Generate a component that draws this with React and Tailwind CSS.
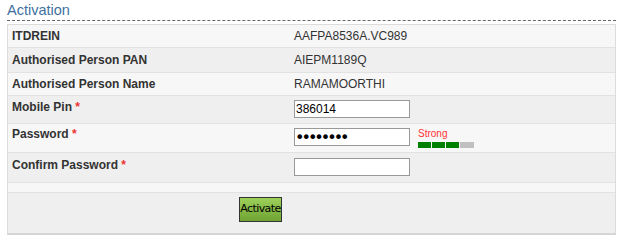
export default function App() {
  const rows = [
    { label: 'ITDREIN', value: 'AAFPA8536A.VC989', h: 'h-[23px]' },
    { label: 'Authorised Person PAN', value: 'AIEPM1189Q', h: 'h-[25px]' },
    { label: 'Authorised Person Name', value: 'RAMAMOORTHI', h: 'h-[23px]' },
  ]

  return (
    <div className="w-[627px] h-[242px] bg-white font-['Liberation_Sans',Arial,sans-serif] text-[12px] text-[#333]">
      <div className="pl-[7px] pr-[11px] pt-[1px]">
        <h3 className="text-[14.5px] leading-[18px] text-[#41709e] font-normal">Activation</h3>
        <div className="mt-[1px] border-t border-dashed border-[#666]" />
        <div className="mt-[3px] border border-[#dcdcdc] border-b-2 border-b-[#d5d5d5]">
          {rows.map((r, i) => (
            <div
              key={r.label}
              className={`flex items-center ${r.h} border-b border-[#e2e2e2] ${i % 2 === 0 ? 'bg-[#f7f7f7]' : 'bg-[#efefef]'}`}
            >
              <div className="w-[286px] pl-[4px] font-bold">{r.label}</div>
              <div>{r.value}</div>
            </div>
          ))}

          <div className="flex h-[28px] border-b border-[#e2e2e2] bg-[#efefef]">
            <div className="w-[286px] pl-[4px] pt-[2px] font-bold">
              Mobile Pin <span className="text-[#e33]">*</span>
            </div>
            <div className="pt-[4px]">
              <input
                readOnly
                value="386014"
                className="w-[116px] h-[18px] bg-white border border-[#999] px-[1px] text-[12px] leading-none text-black outline-none"
              />
            </div>
          </div>

          <div className="flex h-[29px] border-b border-[#e2e2e2] bg-[#f7f7f7]">
            <div className="w-[286px] pl-[4px] pt-[1px] font-bold">
              Password <span className="text-[#e33]">*</span>
            </div>
            <div className="pt-[4px]">
              <input
                readOnly
                type="password"
                value="12345678"
                className="w-[116px] h-[18px] bg-white border border-[#999] px-0 font-['DejaVu_Sans',sans-serif] text-[16px] tracking-[-3px] leading-none text-black outline-none"
              />
            </div>
            <div className="pl-[8px] pt-[4px]">
              <div className="text-[10px] leading-[11px] text-[#f33]">Strong</div>
              <div className="mt-[3px] flex gap-[1px]">
                <div className="w-[13px] h-[6px] bg-[#008000]" />
                <div className="w-[13px] h-[6px] bg-[#008000]" />
                <div className="w-[13px] h-[6px] bg-[#008000]" />
                <div className="w-[14px] h-[6px] bg-[#c0c0c0]" />
              </div>
            </div>
          </div>

          <div className="flex h-[30px] border-b border-[#e2e2e2] bg-[#efefef]">
            <div className="w-[286px] pl-[4px] pt-[3px] font-bold">
              Confirm Password <span className="text-[#e33]">*</span>
            </div>
            <div className="pt-[5px]">
              <input
                readOnly
                type="password"
                value=""
                className="w-[116px] h-[18px] bg-white border border-[#999] px-[1px] text-[12px] leading-none text-black outline-none"
              />
            </div>
          </div>

          <div className="h-[10px] border-b border-[#e2e2e2] bg-[#f7f7f7]" />

          <div className="flex h-[40px] pl-[231px] pt-[4px] bg-[#efefef]">
            <button className="w-[43px] h-[25px] border border-[#333] bg-gradient-to-b from-[#9dd15a] to-[#6fa332] font-['DejaVu_Sans',Tahoma,sans-serif] text-[11px] tracking-[-0.6px] text-black">
              Activate
            </button>
          </div>
        </div>
      </div>
    </div>
  )
}
